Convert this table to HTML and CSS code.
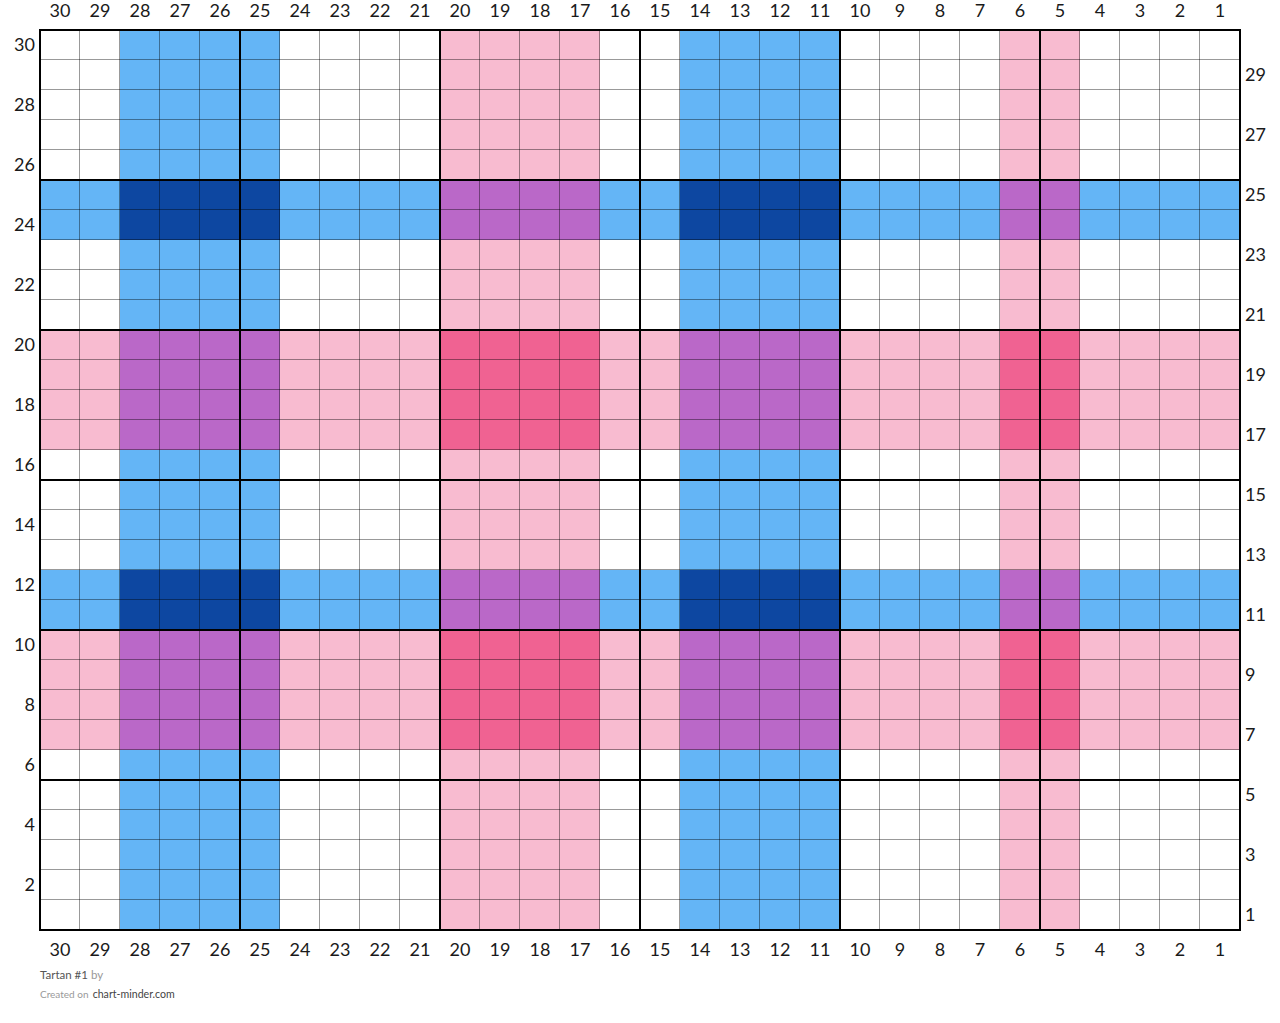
FILE: index.html
```html
<!DOCTYPE html>
<html lang="en">
<head>
<meta charset="utf-8">
<title>Tartan #1</title>
<link rel="stylesheet" href="styles.css">
</head>
<body>
<div class="chart">
  <div class="corner"></div>
  <div class="col-labels top">
    <span>30</span><span>29</span><span>28</span><span>27</span><span>26</span><span>25</span><span>24</span><span>23</span><span>22</span><span>21</span><span>20</span><span>19</span><span>18</span><span>17</span><span>16</span><span>15</span><span>14</span><span>13</span><span>12</span><span>11</span><span>10</span><span>9</span><span>8</span><span>7</span><span>6</span><span>5</span><span>4</span><span>3</span><span>2</span><span>1</span>
  </div>
  <div class="corner"></div>
  <div class="row-labels left">
    <span>30</span><span></span><span>28</span><span></span><span>26</span><span></span><span>24</span><span></span><span>22</span><span></span><span>20</span><span></span><span>18</span><span></span><span>16</span><span></span><span>14</span><span></span><span>12</span><span></span><span>10</span><span></span><span>8</span><span></span><span>6</span><span></span><span>4</span><span></span><span>2</span><span></span>
  </div>
  <div class="board" id="board"></div>
  <div class="row-labels right">
    <span></span><span>29</span><span></span><span>27</span><span></span><span>25</span><span></span><span>23</span><span></span><span>21</span><span></span><span>19</span><span></span><span>17</span><span></span><span>15</span><span></span><span>13</span><span></span><span>11</span><span></span><span>9</span><span></span><span>7</span><span></span><span>5</span><span></span><span>3</span><span></span><span>1</span>
  </div>
  <div class="corner"></div>
  <div class="col-labels bottom">
    <span>30</span><span>29</span><span>28</span><span>27</span><span>26</span><span>25</span><span>24</span><span>23</span><span>22</span><span>21</span><span>20</span><span>19</span><span>18</span><span>17</span><span>16</span><span>15</span><span>14</span><span>13</span><span>12</span><span>11</span><span>10</span><span>9</span><span>8</span><span>7</span><span>6</span><span>5</span><span>4</span><span>3</span><span>2</span><span>1</span>
  </div>
  <div class="corner"></div>
</div>
<div class="footer">
  <div class="title"><span class="name">Tartan #1</span> <span class="by">by</span></div>
  <div class="credit"><span class="created">Created on</span> <span class="site">chart-minder.com</span></div>
</div>
<script src="script.js"></script>
</body>
</html>
```

FILE: styles.css
```css
* { box-sizing: border-box; }
html, body { margin: 0; padding: 0; background: #fff; }
body {
  font-family: Lato, "Open Sans", "Liberation Sans", sans-serif;
  color: #1a1a1a;
}
.chart {
  display: grid;
  grid-template-columns: 40px 1200px 40px;
  grid-template-rows: 30px 900px 38px;
}
.col-labels {
  display: grid;
  grid-template-columns: repeat(30, 40px);
  font-size: 18px;
  text-align: center;
}
.col-labels.top span { line-height: 20px; }
.col-labels.bottom span { line-height: 38px; }
.row-labels {
  display: grid;
  grid-template-rows: repeat(30, 30px);
  font-size: 18px;
}
.row-labels span { line-height: 28px; }
.row-labels.left { text-align: right; padding-right: 5px; }
.row-labels.right { text-align: left; padding-left: 5px; }
.board {
  position: relative;
  display: grid;
  grid-template-columns: repeat(30, 40px);
  grid-template-rows: repeat(30, 30px);
}
.board::after {
  content: "";
  position: absolute;
  left: -1px; top: -1px; right: -1px; bottom: -1px;
  pointer-events: none;
  background-image:
    repeating-linear-gradient(to right, #000 0 2px, transparent 2px 200px),
    repeating-linear-gradient(to bottom, #000 0 2px, transparent 2px 150px),
    repeating-linear-gradient(to right, rgba(0,0,0,0.4) 0 1px, transparent 1px 40px),
    repeating-linear-gradient(to bottom, rgba(0,0,0,0.4) 0 1px, transparent 1px 30px);
}
.cell { background: #fff; }
.c-ww { background: #ffffff; }
.c-bw { background: #64b5f6; }
.c-bb { background: #0d47a1; }
.c-pw { background: #f8bbd0; }
.c-bp { background: #ba68c8; }
.c-pp { background: #f06292; }
.footer {
  padding-left: 40px;
}
.title {
  font-size: 11.5px;
  line-height: 14px;
}
.title .name { color: #555; }
.title .by { color: #999; }
.credit {
  margin-top: 3px;
  line-height: 14px;
}
.credit .created { color: #999; font-size: 10px; }
.credit .site { color: #444; font-size: 10.6px; }
```

FILE: script.js
```js
(function () {
  var cols = "WWBBBBWWWWPPPPWWBBBBWWWWPPWWWW";
  var rows = "WWWWWBBWWWPPPPWWWWBBPPPPWWWWWW";
  var order = { B: 0, P: 1, W: 2 };
  var board = document.getElementById("board");
  var frag = document.createDocumentFragment();
  for (var r = 0; r < 30; r++) {
    for (var c = 0; c < 30; c++) {
      var a = cols[c], b = rows[r];
      var pair = order[a] <= order[b] ? a + b : b + a;
      var d = document.createElement("div");
      d.className = "cell c-" + pair.toLowerCase();
      frag.appendChild(d);
    }
  }
  board.appendChild(frag);
})();
```
